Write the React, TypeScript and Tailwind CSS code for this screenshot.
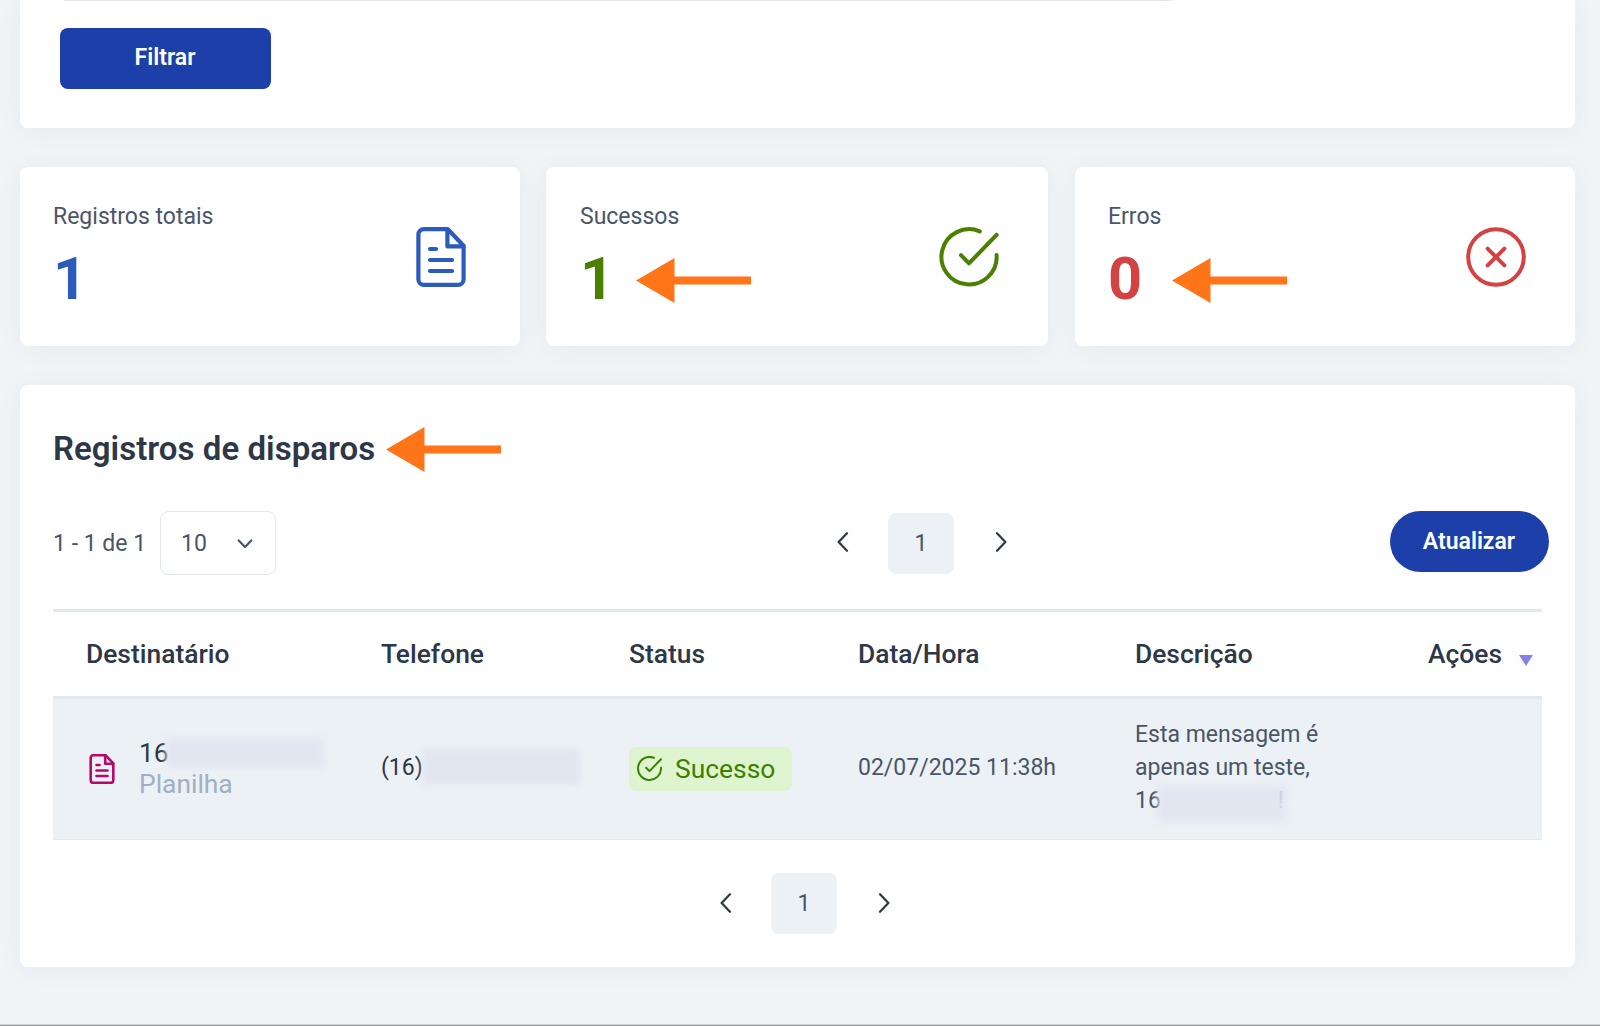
import { ReactNode } from 'react';

const CARD = 'rounded-lg bg-white shadow-[0_3px_26px_rgba(50,60,70,0.05)]';

function DocIcon({ className, stroke = 2.1 }: { className?: string; stroke?: number }) {
  return (
    <svg
      viewBox="0 0 25 30"
      fill="none"
      stroke="currentColor"
      strokeWidth={stroke}
      strokeLinecap="round"
      strokeLinejoin="round"
      className={className}
    >
      <path d="M15.9 1.1H3.9A2.7 2.7 0 0 0 1.2 3.8v22.4A2.7 2.7 0 0 0 3.9 28.9h17.2a2.7 2.7 0 0 0 2.7-2.7V9.4z" />
      <path d="M15.7 1.3v8.4h8M7 11h3M7 16.5h11M7 22h11" />
    </svg>
  );
}

function CheckIcon({ className, stroke = 2 }: { className?: string; stroke?: number }) {
  return (
    <svg
      viewBox="0 0 30 30"
      fill="none"
      stroke="currentColor"
      strokeWidth={stroke}
      strokeLinecap="round"
      strokeLinejoin="round"
      className={className}
    >
      <path d="M20.4 2.2A13.8 13.8 0 1 0 28.8 14" />
      <path d="M11 14.1l4 4.1L28.8 3.9" />
    </svg>
  );
}

function ErrorIcon({ className }: { className?: string }) {
  return (
    <svg viewBox="0 0 30 30" fill="none" stroke="currentColor" strokeWidth="2" strokeLinecap="round" className={className}>
      <circle cx="15" cy="15" r="13.9" />
      <path d="M10.8 10.8l8.4 8.4M19.2 10.8l-8.4 8.4" />
    </svg>
  );
}

function Arrow({ className }: { className?: string }) {
  return (
    <svg viewBox="0 0 115 45" className={`h-[45px] w-[115px] shrink-0 fill-[#ff7518] ${className ?? ''}`}>
      <path d="M0 22.5L38.5 0v18.5H115v8H38.5V45z" />
    </svg>
  );
}

function Chevron({ dir }: { dir: 'left' | 'right' }) {
  return (
    <svg
      viewBox="0 0 12 20"
      fill="none"
      stroke="currentColor"
      strokeWidth="2.2"
      strokeLinecap="round"
      strokeLinejoin="round"
      className="mb-[2px] h-5 w-3 text-[#2d3748]"
    >
      <path d={dir === 'left' ? 'M10 1.2L1.6 10l8.4 8.8' : 'M2 1.2L10.4 10 2 18.8'} />
    </svg>
  );
}

function Pager() {
  return (
    <div className="flex items-center">
      <Chevron dir="left" />
      <span className="mr-[41px] ml-[39px] flex h-[61px] w-[66px] items-center justify-center rounded-lg bg-[#ecf1f5] pt-[2px] text-[23px] text-[#4a5568]">
        1
      </span>
      <Chevron dir="right" />
    </div>
  );
}

interface StatCardProps {
  label: string;
  value: number;
  color: string;
  icon: ReactNode;
  arrow?: ReactNode;
  className: string;
}

function StatCard({ label, value, color, icon, arrow, className }: StatCardProps) {
  return (
    <div className={`flex h-[179px] items-start justify-between ${className} ${CARD}`}>
      <div className="pt-[34px]">
        <p className="text-[23px] leading-8 text-[#4a5568]">{label}</p>
        <div className="mt-[14px] flex h-16 items-center">
          <span className={`text-[59.5px] leading-16 font-bold ${color}`}>{value}</span>
          {arrow}
        </div>
      </div>
      <div className={`mt-[60px] mr-[49px] ${color}`}>{icon}</div>
    </div>
  );
}

/** Cobre os digitos de um telefone. */
function Mask({ className }: { className: string }) {
  return <span className={`block shrink-0 bg-[#e1e6f0] blur-[3px] ${className}`} />;
}

export default function App() {
  return (
    <div className="flex h-[1026px] w-[1600px] flex-col overflow-hidden bg-[#f0f4f7] font-['Roboto',sans-serif] text-[#4a5568]">
      <div className="flex flex-1 flex-col pr-[25px] pl-[20px]">
        <section className="h-32 rounded-b-lg bg-white pl-[39.5px] shadow-[0_3px_26px_rgba(50,60,70,0.05)]">
          <div className="ml-1 h-px w-[1108px] bg-[#e2e8f0]" />
          <button
            type="button"
            className="mt-[26.5px] flex h-[61px] w-[211px] items-center justify-center rounded-lg bg-[#1c3faa] text-[23px] font-semibold text-white"
          >
            Filtrar
          </button>
        </section>

        <section className="mt-[39px] flex">
          <StatCard
            label="Registros totais"
            value={1}
            color="text-[#2b5bbd]"
            icon={<DocIcon className="mr-[5px] h-[60px] w-[50px]" />}
            className="w-[500px] pl-[33px]"
          />
          <StatCard
            label="Sucessos"
            value={1}
            color="text-[#4a7f00]"
            icon={<CheckIcon className="h-[60px] w-[60px]" />}
            arrow={<Arrow className="mt-[2px] ml-[22px]" />}
            className="ml-[26px] w-[502px] pl-[34px]"
          />
          <StatCard
            label="Erros"
            value={0}
            color="text-[#d44343]"
            icon={<ErrorIcon className="h-[60px] w-[60px]" />}
            arrow={<Arrow className="mt-[2px] ml-[30px]" />}
            className="ml-[27px] w-[500px] pl-[33px]"
          />
        </section>

        <section className={`mt-[39px] flex h-[582px] flex-col pr-[33px] pl-[33px] ${CARD}`}>
          <div className="mt-[42px] flex h-[45px] items-center">
            <h2 className="pb-[2px] text-[33px] leading-10 font-semibold tracking-[0.04px] text-[#2d3748]">
              Registros de disparos
            </h2>
            <Arrow className="ml-[11px]" />
          </div>

          <div className="mt-[39px] -mr-[6.5px] flex h-16 items-center">
            <span className="w-[107px] pt-[2px] text-[23px]">1 - 1 de 1</span>
            <div className="flex h-16 w-[116px] items-center justify-between rounded-lg border-[1.5px] border-[#e2e8f0] pt-[2px] pr-[22px] pl-[20px] text-[23px]">
              10
              <svg
                viewBox="0 0 16 10"
                fill="none"
                stroke="currentColor"
                strokeWidth="2.2"
                strokeLinecap="round"
                strokeLinejoin="round"
                className="mb-px h-[10px] w-4"
              >
                <path d="M1.7 1.5L8 8l6.3-6.5" />
              </svg>
            </div>
            <div className="ml-[561px]">
              <Pager />
            </div>
            <button
              type="button"
              className="mb-[3px] ml-auto flex h-[61px] w-[159px] items-center justify-center rounded-full bg-[#1c3faa] pt-[2px] text-[23px] font-semibold text-white"
            >
              Atualizar
            </button>
          </div>

          <div className="mt-[34px] w-[1489px]">
            <div className="grid h-[90px] grid-cols-[328px_248px_229px_277px_293px_1fr] items-center border-y-3 border-[#e2e8f0] pt-[2px] text-[26.4px] font-medium text-[#2d3748]">
              <span className="pl-[33px]">Destinatário</span>
              <span>Telefone</span>
              <span>Status</span>
              <span>Data/Hora</span>
              <span>Descrição</span>
              <span className="flex items-center">
                Ações
                <svg viewBox="0 0 14 11" className="mt-[11px] ml-[17px] h-[11px] w-[14px] fill-[#8583e1]">
                  <path d="M0 0h14L7 11z" />
                </svg>
              </span>
            </div>
            <div className="grid h-[141px] grid-cols-[328px_248px_229px_277px_293px_1fr] items-center border-b-[1.5px] border-[#e2e8f0] bg-[#ecf1f5] text-[23px]">
              <div className="flex items-center pl-9">
                <DocIcon className="h-[30px] w-[26px] text-[#b8086b]" stroke={2.6} />
                <div className="ml-6 text-[26.4px] leading-[31px]">
                  <div className="flex items-center text-[#2d3748]">
                    16
                    <Mask className="-mt-px -ml-[3px] h-[30px] w-[157px]" />
                  </div>
                  <div className="text-[#a0b0c4]">Planilha</div>
                </div>
              </div>
              <div className="flex items-center pb-[2px] text-[#2d3748]">
                (16)
                <Mask className="-mt-[3px] h-9 w-[157px]" />
              </div>
              <div>
                <span className="flex h-11 w-[163px] items-center rounded-lg bg-[#def4cf] pt-[2px] pl-2 text-[26.4px] text-[#3f7f00]">
                  <CheckIcon className="mr-[13px] mb-[3px] h-[25px] w-[25px]" stroke={2.4} />
                  Sucesso
                </span>
              </div>
              <span className="pb-[2px]">02/07/2025 11:38h</span>
              <div className="pb-[3px] leading-[33px]">
                Esta mensagem é
                <br />
                apenas um teste,
                <div className="flex h-[33px] items-center">
                  16
                  <Mask className="mt-[7px] -ml-[3px] h-9 w-[128px]" />
                  <span className="z-10 -ml-[8px] text-[#ced4df]">!</span>
                </div>
              </div>
            </div>
          </div>

          <div className="mt-[33px] ml-[667px]">
            <Pager />
          </div>
        </section>
      </div>
      <div className="h-[2px] border-t border-[#cfd2d4] bg-[#979797]" />
    </div>
  );
}
